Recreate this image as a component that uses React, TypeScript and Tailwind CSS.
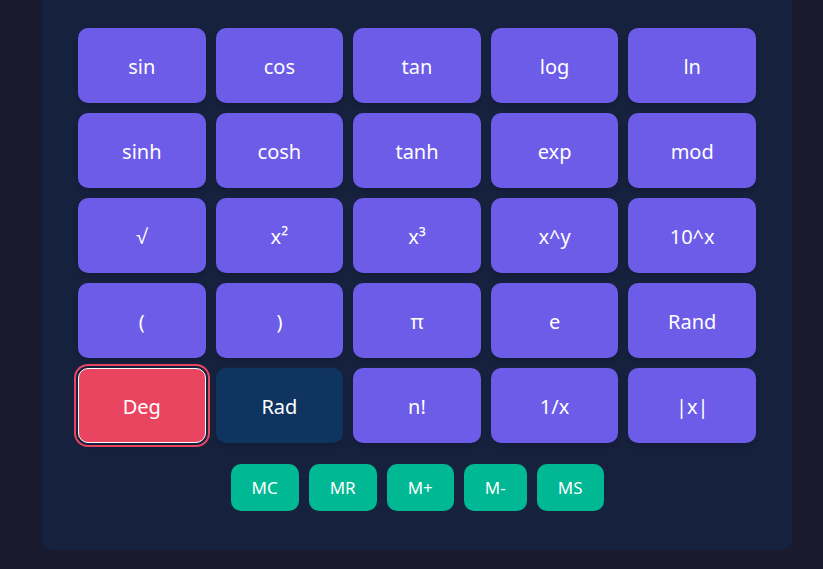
import React from 'react';

const rows: string[][] = [
    ['sin', 'cos', 'tan', 'log', 'ln'],
    ['sinh', 'cosh', 'tanh', 'exp', 'mod'],
    ['√', 'x²', 'x³', 'x^y', '10^x'],
    ['(', ')', 'π', 'e', 'Rand'],
    ['Deg', 'Rad', 'n!', '1/x', '|x|'],
];

const memory = ['MC', 'MR', 'M+', 'M-', 'MS'];

const App: React.FC = () => {
    const getKeyClass = (label: string) => {
        if (label === 'Deg') {
            return 'bg-[#e94560] border border-white ring-2 ring-[#e94560] ring-offset-2 ring-offset-[#16213e]';
        }
        if (label === 'Rad') return 'bg-[#0f3460]';
        return 'bg-[#6c5ce7]';
    };

    return (
        <div className="min-h-[569px] bg-[#1a1a2e] font-['Noto_Sans','Open_Sans',sans-serif]">
            <div className="ml-[42px] w-[750px] rounded-b-[10px] bg-[#16213e] px-[36px] pt-[28px] pb-[39px]">
                <div className="grid grid-cols-5 gap-x-[10px] gap-y-[10px]">
                    {rows.flat().map(label => (
                        <button
                            key={label}
                            className={`h-[75px] rounded-[10px] pt-[2px] text-[20px] text-white shadow-md ${getKeyClass(label)}`}
                        >
                            {label}
                        </button>
                    ))}
                </div>
                <div className="mt-[21px] flex justify-center gap-[10px]">
                    {memory.map(m => (
                        <button
                            key={m}
                            className="h-[47px] rounded-[10px] bg-[#00b894] px-[21px] text-[17px] text-white"
                        >
                            {m}
                        </button>
                    ))}
                </div>
            </div>
        </div>
    );
};

export default App;
